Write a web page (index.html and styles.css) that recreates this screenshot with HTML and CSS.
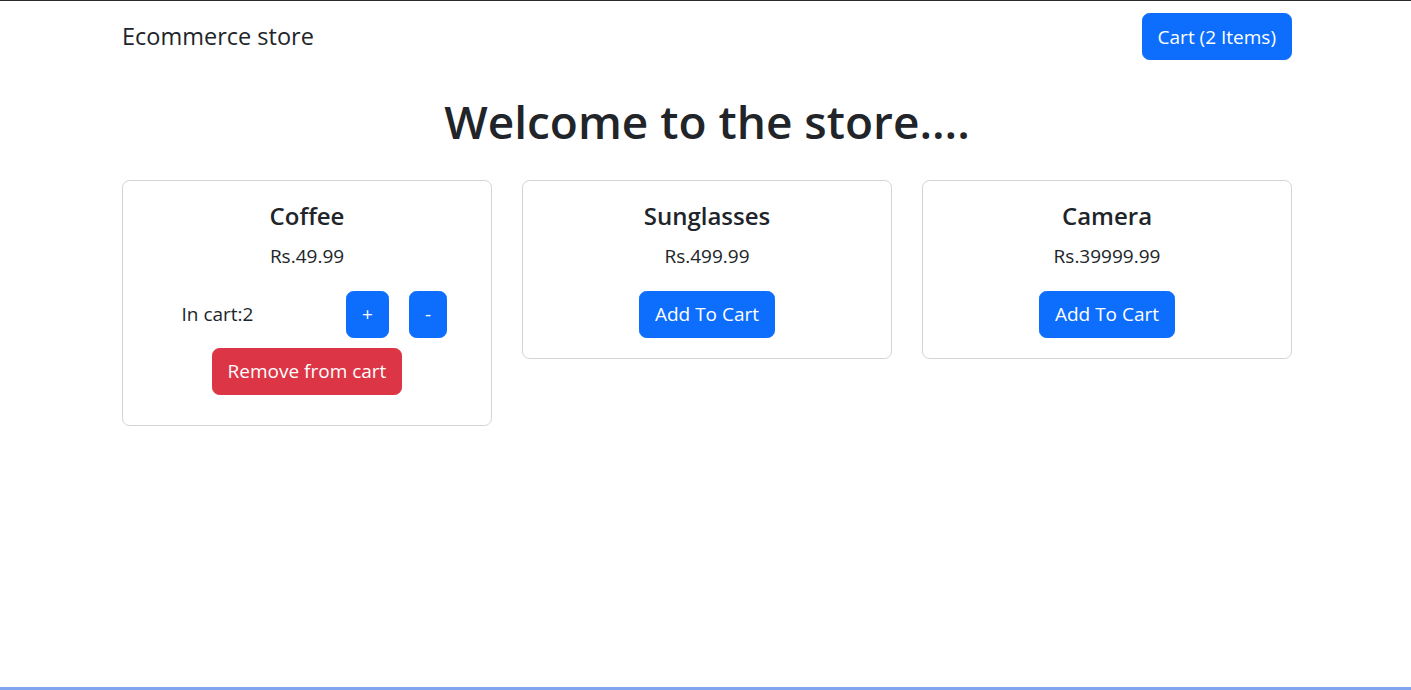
FILE: index.html
```html
<!DOCTYPE html>
<html lang="en">
<head>
<meta charset="utf-8">
<title>Ecommerce store</title>
<link rel="stylesheet" href="styles.css">
</head>
<body>
<nav class="navbar">
  <div class="container nav-inner">
    <a class="brand" href="#">Ecommerce store</a>
    <button class="btn btn-primary">Cart (2 Items)</button>
  </div>
</nav>
<main class="container">
  <h1 class="title">Welcome to the store....</h1>
  <div class="products">
    <div class="card">
      <h5 class="card-title">Coffee</h5>
      <p class="price">Rs.49.99</p>
      <div class="qty-row">
        <div class="qty-label">In cart:2</div>
        <div class="qty-buttons">
          <button class="btn btn-primary">+</button>
          <button class="btn btn-primary">-</button>
        </div>
      </div>
      <div class="remove-wrap">
        <button class="btn btn-danger">Remove from cart</button>
      </div>
    </div>
    <div class="card">
      <h5 class="card-title">Sunglasses</h5>
      <p class="price">Rs.499.99</p>
      <button class="btn btn-primary">Add To Cart</button>
    </div>
    <div class="card">
      <h5 class="card-title">Camera</h5>
      <p class="price">Rs.39999.99</p>
      <button class="btn btn-primary">Add To Cart</button>
    </div>
  </div>
</main>
<div class="window-edge"></div>
</body>
</html>
```
FILE: styles.css
```css
* { box-sizing: border-box; }

html, body { height: 100%; }

body {
  margin: 0;
  border-top: 1px solid #2b2b2b;
  font-family: "Open Sans", "Noto Sans", sans-serif;
  font-size: 19px;
  line-height: 30px;
  color: #212529;
  background: #fff;
}

.container {
  width: 1170px;
  margin-left: calc(50% - 583.5px);
  margin-right: auto;
}

.navbar {
  padding: 11px 0 10px;
}

.nav-inner {
  display: flex;
  align-items: center;
  justify-content: space-between;
}

.brand {
  font-size: 23.5px;
  line-height: 37.5px;
  padding: 6px 0;
  color: #212529;
  text-decoration: none;
}

.btn {
  font-family: inherit;
  font-size: 19px;
  line-height: 30px;
  padding: 7.5px 15px;
  border: 1px solid transparent;
  border-radius: 7.5px;
  color: #fff;
  cursor: pointer;
}

.btn-primary { background: #0d6efd; border-color: #0d6efd; }
.btn-danger { background: #dc3545; border-color: #dc3545; }

.title {
  margin: 20px 0 10px;
  font-size: 46px;
  font-weight: 600;
  line-height: 58px;
  text-align: center;
}

.products {
  display: grid;
  grid-template-columns: repeat(3, 1fr);
  column-gap: 30px;
  align-items: start;
  margin-top: 30px;
}

.card {
  border: 1px solid #d4d4d4;
  border-radius: 7.5px;
  padding: 20px;
  text-align: center;
}

.card-title {
  margin: 0 0 10px;
  font-size: 24px;
  font-weight: 600;
  line-height: 30px;
}

.price {
  margin: 0 0 20px;
}

.qty-row {
  display: grid;
  grid-template-columns: 1fr 1fr;
  column-gap: 30px;
  align-items: center;
}

.qty-buttons {
  display: flex;
  justify-content: center;
  gap: 20px;
}

.remove-wrap {
  margin: 10px 0 10px;
}

.window-edge {
  position: fixed;
  left: 0;
  right: 0;
  bottom: 0;
  height: 3px;
  background: #7fa5ef;
}
```
